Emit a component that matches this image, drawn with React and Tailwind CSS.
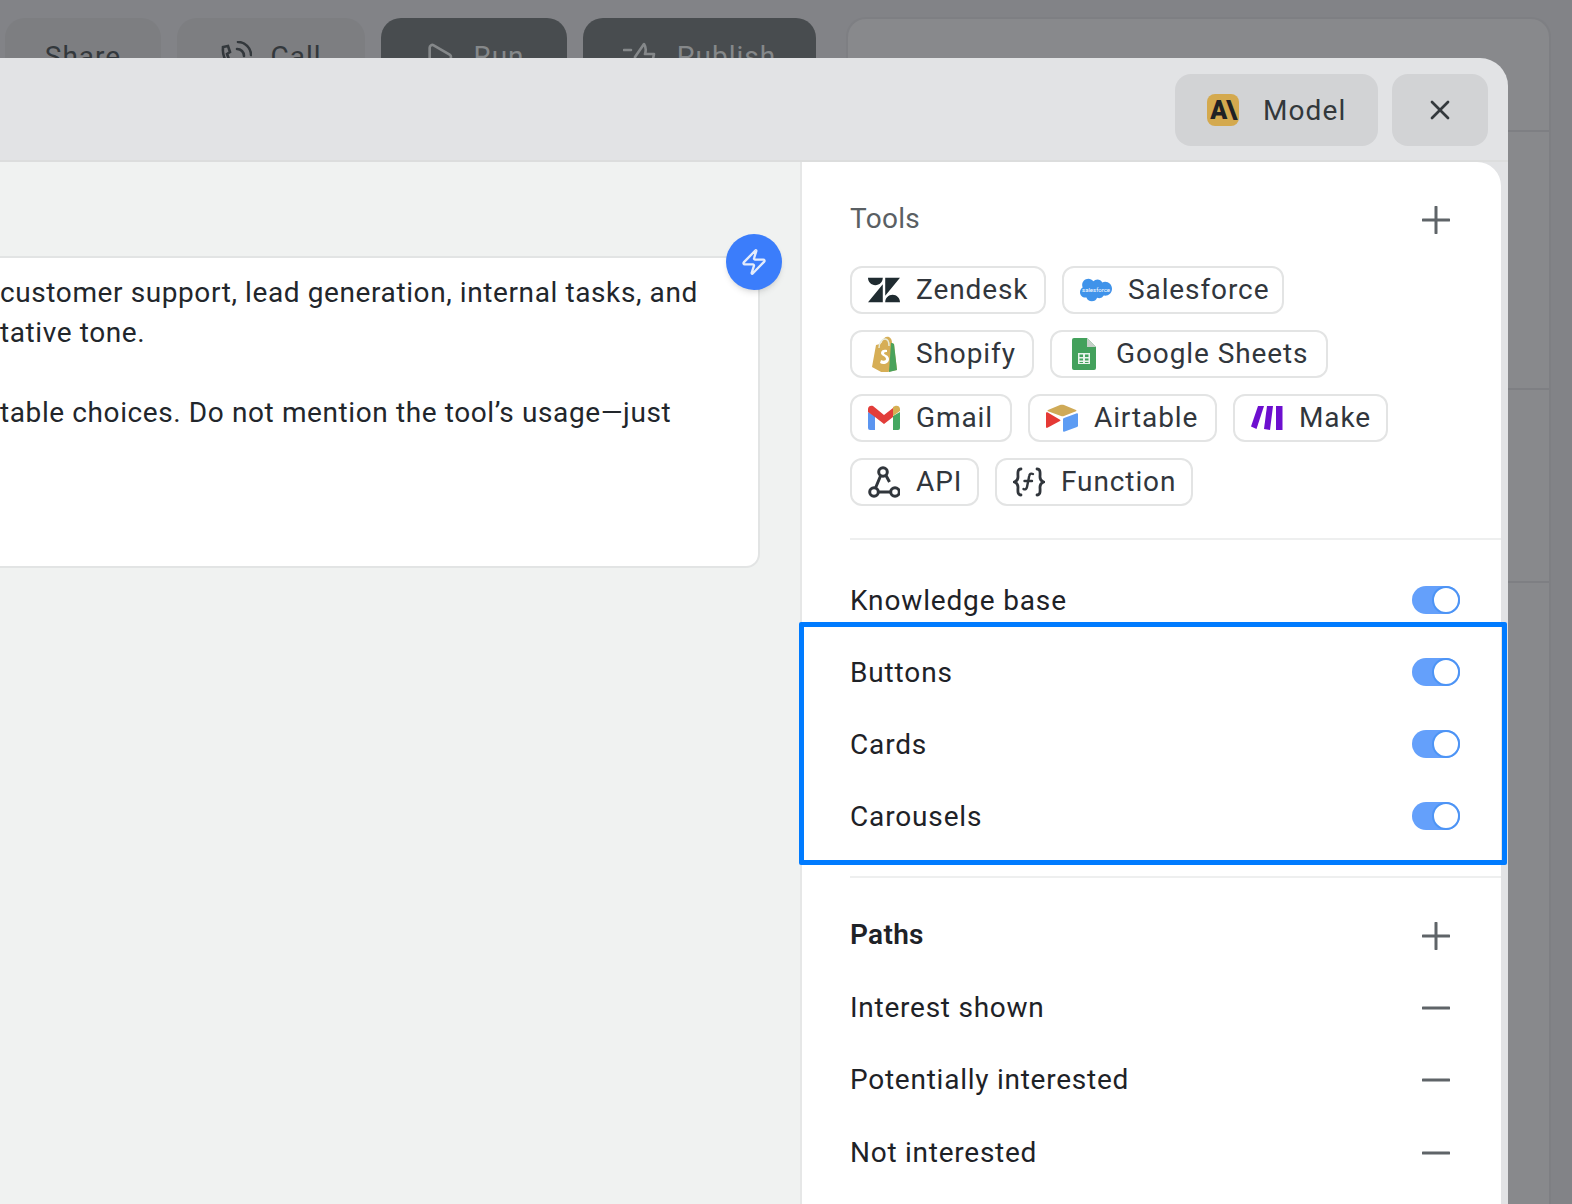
import React from "react";
import { X, Zap, Play } from "lucide-react";
import { SiZendesk, SiSalesforce } from "react-icons/si";

const Shopify = () => (
  <svg viewBox="0 0 32 36" className="w-8 h-9">
    <path d="M4 31 8 9c3-1 5-1 6-3 1-4 4-6 7-5 2 1 3 3 3 6l2 1 3 26-14 3z" fill="#d6ae56" />
    <path d="m24 7 2 1 3 26-8 2 2-29z" fill="#4aa35c" />
    <path d="M11 12c0-5 3-9 6-9s4 3 4 7" fill="none" stroke="#e8ebd9" strokeWidth="1.5" />
    <path d="M19 14c-3-1-6 0-6 3 0 3 5 3 5 6 0 2-3 2-5 1l-1 3c3 2 9 1 9-4 0-4-5-4-5-6 0-1 2-1 3-1z" fill="#fff" />
  </svg>
);
const Sheets = () => (
  <svg viewBox="0 0 24 32" className="w-6 h-8">
    <path d="M0 2a2 2 0 0 1 2-2h13l9 9v21a2 2 0 0 1-2 2H2a2 2 0 0 1-2-2z" fill="#43a15c" />
    <path d="M15 0l9 9h-9z" fill="#c7d0c9" />
    <path d="M6 15h12v11H6zM7.500 16.500v2.500h3.500v-2.500zm5.500 0v2.500h3.500v-2.500zm-5.500 4v2h3.500v-2zm5.500 0v2h3.500v-2zm-5.500 3.500v1h3.500v-1zm5.500 0v1h3.500v-1z" fill="#e8f3ea" fillRule="evenodd" />
  </svg>
);
const Gmail = () => (
  <svg viewBox="0 0 32 26" className="w-8 h-[26px]">
    <path d="M0 7v16a2 2 0 0 0 2 2h5V11z" fill="#5b95f0" />
    <path d="M32 7v16a2 2 0 0 1-2 2h-5V11z" fill="#45a862" />
    <path d="M25 2v9l7-5V4c0-3-3-4-5-3z" fill="#d5ae52" />
    <path d="M0 4v3l7 5 9 7 9-7V3l-9 7L5 1C3-0 0 1 0 4z" fill="#e23d3a" />
  </svg>
);
const Airtable = () => (
  <svg viewBox="0 0 32 28" className="w-8 h-7">
    <path d="M14 1 2 6c-.6.300-.6 1 0 1.300L15 12c1 .4 2 .4 3 0L30 7.300c.6-.3.6-1 0-1.300L18 1c-1-.5-3-.5-4 0z" fill="#cfaa57" />
    <path d="M17 15v12c0 .6.600 1 1.100.8L31 23c.6-.2 1-.7 1-1.300V10c0-.6-.6-1-1.100-.8L18 14c-.6.200-1 .5-1 1z" fill="#5d9cf3" />
    <path d="M0 9v14c0 .7.800 1.100 1.400.8L14 17c.5-.3.500-1 0-1.300L1.400 8.300C.800 8 0 8.400 0 9z" fill="#e53935" />
  </svg>
);
const Make = () => (
  <svg viewBox="0 0 32 24" className="w-8 h-6">
    <path d="M7 0h6L5.500 23 0 20.500z" fill="#6d0fcf" />
    <path d="M16 0h6l-3 24-6-1z" fill="#6d0fcf" />
    <path d="M25 0h6.500v24H25z" fill="#6d0fcf" />
  </svg>
);
const Api = () => (
  <svg viewBox="0 0 32 32" className="w-8 h-8" fill="none" stroke="#31363c" strokeWidth="3">
    <circle cx="15" cy="6" r="4.300" />
    <circle cx="6" cy="26" r="4.300" />
    <circle cx="27" cy="26" r="4.300" />
    <path d="m12.500 10-5 12M18 9.500l3.500 6.500M10.500 26h12" />
  </svg>
);
const Fn = () => (
  <svg viewBox="0 0 32 32" className="w-8 h-8" fill="none" stroke="#31363c" strokeWidth="2.800" strokeLinecap="round">
    <path d="M8 3C4 3 5 8 5 11c0 3-1 4-3.500 5C4 17 5 18 5 21c0 3-1 8 3 8M24 3c4 0 3 5 3 8 0 3 1 4 3.500 5-2.500 1-3.500 2-3.500 5 0 3 1 8-3 8" />
    <path d="M20 8c-2-1-3.500 0-3.800 2l-2.200 11c-.4 2-2 3-3.500 2M11.500 15h7.500" strokeWidth="2.400" />
  </svg>
);
const PlusIcon = () => (
  <svg viewBox="0 0 28 28" className="w-7 h-7 mt-[2px]" stroke="#5f6468" strokeWidth="3" strokeLinecap="round">
    <path d="M1 14h26M14 1v26" />
  </svg>
);
const MinusIcon = () => (
  <svg viewBox="0 0 28 28" className="w-7 h-7" stroke="#5f6468" strokeWidth="3" strokeLinecap="round">
    <path d="M1 14h26" />
  </svg>
);
const CallIcon = () => (
  <svg viewBox="0 0 32 32" className="w-8 h-8" fill="none" stroke="currentColor" strokeWidth="2.600" strokeLinecap="round">
    <path d="M3 6c-1 9 4 20 13 23l4-5-6-4-3 2c-2-3-3-6-4-9l3-2-2-6z" />
    <path d="M17 8c4 0 7 3 7 7M18 1c7 0 13 6 13 13" />
  </svg>
);
const PublishIcon = () => (
  <svg viewBox="0 0 36 32" className="w-9 h-8" fill="none" stroke="currentColor" strokeWidth="2.600" strokeLinecap="round" strokeLinejoin="round">
    <path d="M1 9h7M12 16 21 3c2 3 2 7 1 10h9l-3 15H12z" />
  </svg>
);

const Chip = ({ icon, w, children }) => (
  <div className={`flex items-center gap-4 h-12 pl-[16px] border-2 border-[#e3e4e4] rounded-[12px] bg-white text-[#31363c] ${w}`}>
    <span className="w-8 flex justify-center items-center shrink-0">{icon}</span>
    <span className="whitespace-nowrap tracking-[0.9px]">{children}</span>
  </div>
);

const Toggle = () => (
  <div className="w-12 h-7 rounded-full bg-[#64a0fb] flex justify-end">
    <div className="w-[28px] h-7 rounded-full bg-white border-2 border-[#4d94f5]" />
  </div>
);

const ToggleRow = ({ label }) => (
  <div className="flex items-center justify-between h-[72px] pr-[41px]">
    <span className="text-[#1e2227] tracking-[0.85px] pt-px">{label}</span>
    <Toggle />
  </div>
);

const PathRow = ({ label }) => (
  <div className="flex items-center justify-between h-[72.300px] pr-[51px]">
    <span className="text-[#1e2227] tracking-[0.75px]">{label}</span>
    <MinusIcon />
  </div>
);

const TopButton = ({ w, dark, children }) => (
  <div className={`h-[78px] rounded-[20px] flex items-center justify-center gap-[18px] tracking-[1px] ${w} ${dark ? "bg-[#484c4f] text-[#85888a]" : "bg-[#7d7e81] text-[#33383c]"}`}>
    {children}
  </div>
);

export default function App() {
  return (
    <div className="relative w-[1572px] h-[1204px] overflow-hidden bg-[#828387] text-[28px] tracking-[0.3px] font-['Roboto','Liberation_Sans',sans-serif]">
      {/* Page behind the dialog */}
      <div className="flex items-start pt-[17px] pl-[5px]">
        <div className="flex gap-4 pt-px">
          <TopButton w="w-[156px]">Share</TopButton>
          <TopButton w="w-[188px]"><CallIcon />Call</TopButton>
          <TopButton w="w-[186px]" dark><Play className="w-8 h-8" />Run</TopButton>
          <TopButton w="w-[233px]" dark><PublishIcon />Publish</TopButton>
        </div>
        <div className="ml-[30px] w-[705px] h-[1187px] rounded-t-[20px] border-2 border-b-0 border-[#7e7f83] bg-[#88898c] flex flex-col">
          <div className="h-[113px] border-b-2 border-[#7e7f83]" />
          <div className="h-[258px] border-b-2 border-[#7e7f83]" />
          <div className="h-[193px] border-b-2 border-[#7e7f83]" />
        </div>
      </div>

      {/* Dialog */}
      <div className="absolute left-0 top-[58px] w-[1508px] bottom-0 bg-[#e2e3e5] rounded-tr-[28px] flex flex-col">
        <div className="h-[102px] flex items-start justify-end gap-[14px] pt-[16px] pr-[20px] shrink-0">
          <div className="w-[203px] h-[72px] rounded-[16px] bg-[#d2d3d5] flex items-center pl-[32px] gap-[24px] text-[#33383c]">
            <div className="w-8 h-8 rounded-[8px] bg-[#d4a94e] text-[#1f2124] flex items-center justify-center text-[25px] font-black leading-none tracking-[-1px]">A\</div>
            <span className="tracking-[1.100px] pt-px">Model</span>
          </div>
          <div className="w-[96px] h-[72px] rounded-[16px] bg-[#d2d3d5] flex items-center justify-center text-[#33383c]">
            <X className="w-8 h-8" strokeWidth={2} />
          </div>
        </div>

        <div className="flex-1 flex border-t-2 border-[#dcdddd] min-h-0">
          {/* Prompt column */}
          <div className="relative w-[800px] bg-[#f0f2f1] pt-[94px] pr-[40px]">
            <div className="h-[312px] bg-white border-2 border-l-0 border-[#e2e4e4] rounded-r-[14px] pt-[15px] text-[#22262b] leading-[40px] whitespace-nowrap tracking-[0.6px]">
              <div>customer support, lead generation, internal tasks, and</div>
              <div>tative tone.</div>
              <div className="h-10" />
              <div>table choices. Do not mention the tool’s usage—just</div>
            </div>
            <div className="absolute left-[726px] top-[72px] w-14 h-14 rounded-full bg-[#3b7dfb] shadow-md flex items-center justify-center">
              <Zap className="w-7 h-7 text-[#e4ecfb]" strokeWidth={2} />
            </div>
          </div>

          {/* Side panel */}
          <div className="w-[701px] bg-white border-l-2 border-[#e6e7e7] rounded-tr-[24px] pl-[48px] pt-[37px]">
            <div className="flex items-center justify-between h-10 pr-[51px]">
              <span className="text-[#5a5f63]">Tools</span>
              <PlusIcon />
            </div>
            <div className="mt-[27px] flex flex-col gap-4">
              <div className="flex gap-4">
                <Chip w="w-[196px]" icon={<SiZendesk className="w-8 h-8 text-[#1f2b30]" />}>Zendesk</Chip>
                <Chip
                  w="w-[222px]"
                  icon={
                    <span className="relative w-8 h-8 flex items-center justify-center">
                      <SiSalesforce className="w-8 h-8 text-[#3f93ea]" />
                      <span className="absolute inset-0 flex items-center justify-center text-[6px] tracking-normal text-white leading-none">salesforce</span>
                    </span>
                  }
                >
                  Salesforce
                </Chip>
              </div>
              <div className="flex gap-4">
                <Chip w="w-[184px]" icon={<Shopify />}>Shopify</Chip>
                <Chip w="w-[278px]" icon={<Sheets />}>Google Sheets</Chip>
              </div>
              <div className="flex gap-4">
                <Chip w="w-[162px]" icon={<Gmail />}>Gmail</Chip>
                <Chip w="w-[189px]" icon={<Airtable />}>Airtable</Chip>
                <Chip w="w-[155px]" icon={<Make />}>Make</Chip>
              </div>
              <div className="flex gap-4">
                <Chip w="w-[129px]" icon={<Api />}>API</Chip>
                <Chip w="w-[198px]" icon={<Fn />}>Function</Chip>
              </div>
            </div>
            <div className="mt-[32px] border-t-2 border-[#eeefef]" />
            <div className="mt-[24px]">
              <ToggleRow label="Knowledge base" />
              <ToggleRow label="Buttons" />
              <ToggleRow label="Cards" />
              <ToggleRow label="Carousels" />
            </div>
            <div className="mt-[24px] border-t-2 border-[#eeefef]" />
            <div className="mt-[20px]">
              <div className="flex items-center justify-between h-[74px] pr-[51px]">
                <span className="font-semibold text-[#1e2227]">Paths</span>
                <PlusIcon />
              </div>
              <PathRow label="Interest shown" />
              <PathRow label="Potentially interested" />
              <PathRow label="Not interested" />
            </div>
          </div>
        </div>
      </div>

      {/* Annotation box */}
      <div className="absolute left-[799px] top-[622px] w-[708px] h-[243px] border-[5px] border-[#007bff] rounded-[2px]" />
    </div>
  );
}
